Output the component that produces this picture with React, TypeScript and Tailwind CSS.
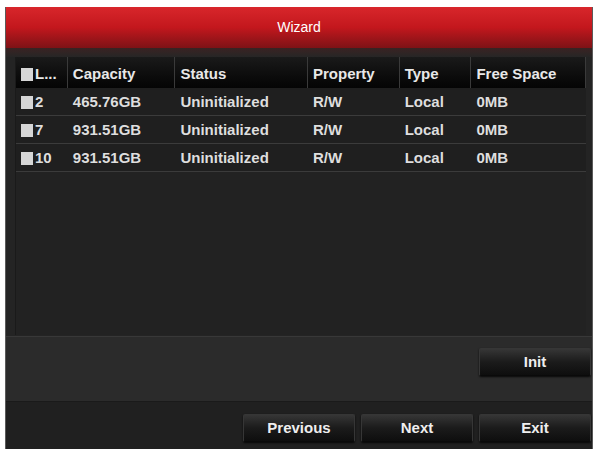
const columns = [
  { label: "L...", width: "w-[52px]" },
  { label: "Capacity", width: "w-[108px]" },
  { label: "Status", width: "w-[133px]" },
  { label: "Property", width: "w-[92px]" },
  { label: "Type", width: "w-[72px]" },
  { label: "Free Space", width: "w-[115px]" },
]

const disks = [
  { id: "2", capacity: "465.76GB" },
  { id: "7", capacity: "931.51GB" },
  { id: "10", capacity: "931.51GB" },
]

const Check = () => <span className="inline-block w-[12px] h-[13px] bg-[#d6d6d6] mr-[2px] shrink-0" />

const Button = ({ children }: { children: string }) => (
  <button className="w-[112px] h-[28px] rounded-[2px] border border-[#363636] border-b-[#0a0a0a] bg-gradient-to-b from-[#363636] via-[#1b1b1b] to-[#0e0e0e] text-[#eeeeee] text-[15px] font-bold shadow-[0_1px_2px_rgba(0,0,0,0.8)]">
    {children}
  </button>
)

export default function App() {
  return (
    <div className="w-[598px] h-[449px] bg-white pt-[7px] px-[5px] overflow-hidden font-['Liberation_Sans',Arial,sans-serif]">
      <div className="h-[442px] bg-[#242424] border-x border-[#5a5a5a] flex flex-col">
        <div className="h-[41px] bg-gradient-to-b from-[#d8262b] via-[#c3171d] to-[#7e1216] flex items-center justify-center text-white text-[14px]">
          Wizard
        </div>
        <div className="h-[9px] bg-gradient-to-b from-[#3a2222] to-[#262626]" />

        <div className="ml-[9px] mr-[6px] h-[278px] bg-[#222222] border-l border-[#1a1a1a] flex flex-col">
          <div className="h-[31px] flex bg-gradient-to-b from-[#1a1a1a] to-[#050505] text-[#e8e8e8] text-[15px] font-bold">
            {columns.map((col, i) => (
              <div key={col.label} className={`${col.width} flex items-center pl-[5px] pt-[3px] border-r border-[#3a3a3a]`}>
                {i === 0 && <Check />}
                {col.label}
              </div>
            ))}
          </div>
          {disks.map((d) => (
            <div key={d.id} className="h-[28px] flex bg-[#1f1f1f] border-b border-[#3b3b3b] text-[#dedede] text-[15px] font-bold">
              <div className="w-[52px] flex items-center pl-[5px] pt-[2px]">
                <Check />
                {d.id}
              </div>
              <div className="w-[108px] flex items-center pl-[5px] pt-[2px]">{d.capacity}</div>
              <div className="w-[133px] flex items-center pl-[5px] pt-[2px]">Uninitialized</div>
              <div className="w-[92px] flex items-center pl-[5px] pt-[2px]">R/W</div>
              <div className="w-[72px] flex items-center pl-[5px] pt-[2px]">Local</div>
              <div className="w-[115px] flex items-center pl-[5px] pt-[2px]">0MB</div>
            </div>
          ))}
        </div>

        <div className="h-[65px] mt-[1px] bg-[#2b2b2b] border-t border-[#383838] flex justify-end items-start pt-[11px] pr-[1px]">
          <Button>Init</Button>
        </div>

        <div className="flex-1 bg-[#202020] border-t border-[#1a1a1a] flex justify-end gap-[6px] pt-[12px] pr-[1px]">
          <Button>Previous</Button>
          <Button>Next</Button>
          <Button>Exit</Button>
        </div>
      </div>
    </div>
  )
}
